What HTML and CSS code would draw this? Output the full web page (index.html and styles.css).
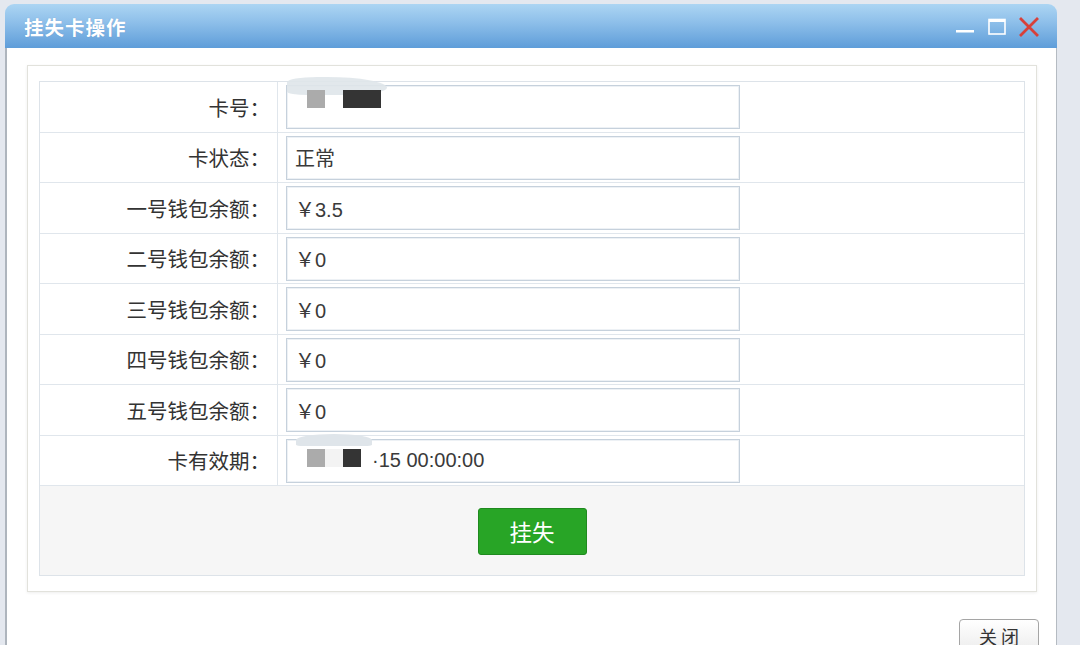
FILE: index.html
```html
<!DOCTYPE html>
<html lang="zh-CN">
<head>
<meta charset="utf-8">
<title>挂失卡操作</title>
<link rel="stylesheet" href="styles.css">
</head>
<body>
<div class="window">
  <div class="titlebar">
    <span class="title">挂失卡操作</span>
    <div class="controls">
      <svg class="ctl" width="20" height="20" viewBox="0 0 20 20"><rect x="1" y="13" width="18" height="2.5" fill="#fff"/></svg>
      <svg class="ctl" width="20" height="20" viewBox="0 0 20 20"><rect x="2" y="2.5" width="16" height="14.5" fill="none" stroke="#fff" stroke-width="1.6"/><rect x="2" y="2" width="16" height="3" fill="#fff"/></svg>
      <svg class="ctl" width="20" height="20" viewBox="0 0 20 20"><path d="M2 2 L18 18 M18 2 L2 18" stroke="#d8403a" stroke-width="2.8" stroke-linecap="square"/></svg>
    </div>
  </div>
  <div class="body">
    <div class="panel">
      <div class="table">
        <div class="row">
          <div class="label">卡号：</div>
          <div class="cell"><div class="input redacted">
            <span class="blob blob-a"></span>
            <span class="sq sq-light sq-1"></span><span class="sq sq-dark sq-wide"></span>
          </div></div>
        </div>
        <div class="row">
          <div class="label">卡状态：</div>
          <div class="cell"><div class="input">正常</div></div>
        </div>
        <div class="row">
          <div class="label">一号钱包余额：</div>
          <div class="cell"><div class="input">￥3.5</div></div>
        </div>
        <div class="row">
          <div class="label">二号钱包余额：</div>
          <div class="cell"><div class="input">￥0</div></div>
        </div>
        <div class="row">
          <div class="label">三号钱包余额：</div>
          <div class="cell"><div class="input">￥0</div></div>
        </div>
        <div class="row">
          <div class="label">四号钱包余额：</div>
          <div class="cell"><div class="input">￥0</div></div>
        </div>
        <div class="row">
          <div class="label">五号钱包余额：</div>
          <div class="cell"><div class="input">￥0</div></div>
        </div>
        <div class="row">
          <div class="label">卡有效期：</div>
          <div class="cell"><div class="input redacted date">
            <span class="blob blob-b"></span>
            <span class="sq sq-light"></span><span class="sq sq-pale"></span><span class="sq sq-dark"></span><span class="date-text">·15 00:00:00</span>
          </div></div>
        </div>
        <div class="actions">
          <button class="btn-green" type="button">挂失</button>
        </div>
      </div>
    </div>
    <div class="footer">
      <button class="btn-close" type="button">关 闭</button>
    </div>
  </div>
</div>
</body>
</html>
```

FILE: styles.css
```css
html, body {
  margin: 0;
  padding: 0;
}
body {
  background: #e4e8ef;
  font-family: "Liberation Sans", "Noto Sans CJK SC", sans-serif;
  color: #333;
  height: 645px;
  overflow: hidden;
}
.window {
  margin: 4px 0 0 5px;
  width: 1052px;
}
.titlebar {
  height: 44px;
  border-radius: 9px 9px 0 0;
  background: linear-gradient(#acd5f3, #8fc0ea 40%, #5e9dd9);
  display: flex;
  align-items: center;
  justify-content: space-between;
  padding: 0 18px 0 19px;
  box-sizing: border-box;
}
.title {
  color: #fff;
  font-family: "Noto Sans CJK SC", sans-serif;
  font-weight: bold;
  font-size: 19.5px;
  letter-spacing: 1px;
  text-shadow: 0 0 1px rgba(40, 90, 150, 0.3);
}
.controls {
  display: flex;
  gap: 12px;
  padding-top: 2px;
}
.ctl {
  display: block;
}
.body {
  background: #fff;
  border-left: 2px solid #aeb5bd;
  border-right: 1px solid #b5bbc2;
  padding: 17px 19px 0 20px;
  height: 620px;
  box-sizing: border-box;
}
.panel {
  border: 1px solid #e2e2dc;
  box-shadow: 0 1px 3px rgba(0, 0, 0, 0.07);
  padding: 15px 11px;
  background: #fff;
}
.table {
  border: 1px solid #dde3e9;
}
.row {
  display: grid;
  grid-template-columns: 238px 1fr;
  height: 50.5px;
  box-sizing: border-box;
  border-bottom: 1px solid #e0e6ec;
}
.label {
  border-right: 1px solid #e0e6ec;
  display: flex;
  align-items: center;
  justify-content: flex-end;
  padding-right: 7px;
  font-family: "Noto Sans CJK SC", sans-serif;
  font-size: 20.5px;
  color: #333;
}
.cell {
  display: flex;
  align-items: center;
  padding-left: 8px;
}
.input {
  position: relative;
  width: 454px;
  height: 44px;
  box-sizing: border-box;
  border: 1px solid #c6d1dc;
  box-shadow: inset 0 0 0 1px #edf1f5;
  padding-left: 8px;
  display: flex;
  align-items: center;
  font-family: "Liberation Sans", "Noto Sans CJK SC", sans-serif;
  font-size: 20px;
  color: #3a3a3a;
  margin-top: 1px;
}
.redacted {
  padding-left: 20px;
}
.blob {
  position: absolute;
  background: #dfe5ea;
}
.blob-a {
  left: 0;
  top: -9px;
  width: 100px;
  height: 18px;
  border-radius: 30% 60% 40% 20%;
  opacity: 0.9;
}
.blob-b {
  left: 9px;
  top: -6px;
  width: 76px;
  height: 12px;
  border-radius: 50% 50% 10% 10%;
}
.sq {
  display: inline-block;
  width: 18px;
  height: 18px;
  position: relative;
  top: -8px;
}
.sq-light {
  background: #ababab;
}
.sq-1 {
  margin-right: 18px;
}
.sq-dark {
  background: #343434;
}
.sq-wide {
  width: 38px;
}
.sq-pale {
  background: #f3f3f3;
}
.date .sq {
  top: -3px;
}
.date-text {
  margin-left: 11px;
  font-size: 20px;
}
.actions {
  height: 89px;
  background: #f6f6f6;
  display: flex;
  align-items: center;
  justify-content: center;
}
.btn-green {
  width: 109px;
  height: 47px;
  background: #28a526;
  border: 1px solid #1f8a1f;
  border-radius: 3px;
  color: #fff;
  font-family: "Noto Sans CJK SC", sans-serif;
  font-size: 22.5px;
  padding: 0;
  margin-top: 1px;
}
.footer {
  display: flex;
  justify-content: flex-end;
  padding-top: 27px;
  padding-right: 0;
}
.btn-close {
  width: 80px;
  height: 34px;
  background: linear-gradient(#ffffff, #ececec);
  border: 1px solid #a5a5a5;
  border-radius: 4px;
  font-family: "Noto Sans CJK SC", sans-serif;
  font-size: 18px;
  color: #333;
  padding: 0;
  line-height: 1;
  margin-right: -2px;
}
```
